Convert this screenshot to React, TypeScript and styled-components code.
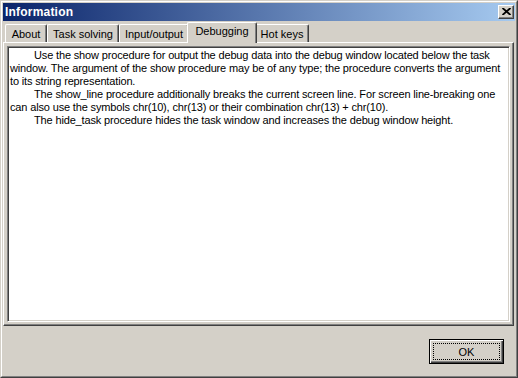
import React from "react";
import styled, { createGlobalStyle } from "styled-components";

const Global = createGlobalStyle`
  html, body { margin: 0; padding: 0; background: #d4d0c8; overflow: hidden; }
  * { box-sizing: border-box; }
`;

const Window = styled.div`
  width: 518px;
  height: 378px;
  border: 1px solid;
  border-color: #d4d0c8 #404040 #404040 #d4d0c8;
  background: #d4d0c8;
  font-family: "Liberation Sans", Arial, sans-serif;
  font-size: 11px;
  color: #000;
`;

const WindowInner = styled.div`
  height: 100%;
  border: 1px solid;
  border-color: #ffffff #808080 #808080 #ffffff;
  padding: 1px;
  display: flex;
  flex-direction: column;
`;

const TitleBar = styled.div`
  height: 18px;
  flex: none;
  display: flex;
  align-items: center;
  justify-content: space-between;
  padding: 0 1px 0 2px;
  background: linear-gradient(to right, #0a246a, #a6caf0);
`;

const TitleText = styled.span`
  color: #fff;
  font-weight: bold;
  font-size: 12px;
  letter-spacing: 0.2px;
  line-height: 18px;
`;

const CloseButton = styled.div`
  width: 16px;
  height: 14px;
  border: 1px solid;
  border-color: #ffffff #404040 #404040 #ffffff;
  box-shadow: inset -1px -1px #808080;
  background: #d4d0c8;
  display: flex;
  align-items: center;
  justify-content: center;
  padding-bottom: 1px;
`;

const Gap = styled.div`
  height: 1px;
  flex: none;
`;

const TabStrip = styled.div`
  height: 20px;
  flex: none;
  display: flex;
  align-items: flex-end;
  padding-left: 2px;
  position: relative;
  z-index: 1;
`;

const Tab = styled.div<{ $width: number; $active?: boolean }>`
  width: ${(p) => (p.$active ? p.$width + 4 : p.$width)}px;
  height: ${(p) => (p.$active ? 21 : 18)}px;
  margin: ${(p) => (p.$active ? "0 -2px -1px -2px" : "0")};
  padding-top: ${(p) => (p.$active ? 0 : 1)}px;
  position: relative;
  z-index: ${(p) => (p.$active ? 2 : 1)};
  background: #d4d0c8;
  border-top: 1px solid #ffffff;
  border-left: 1px solid #ffffff;
  border-right: 1px solid #404040;
  border-radius: 2px 2px 0 0;
  box-shadow: inset -1px 0 #808080;
  text-align: center;
  line-height: 16px;
  white-space: nowrap;
`;

const Panel = styled.div`
  height: 284px;
  flex: none;
  margin-right: 1px;
  border: 1px solid;
  border-color: #ffffff #404040 #404040 #ffffff;
  box-shadow: inset -1px -1px #808080;
  padding: 3px;
  display: flex;
`;

const Memo = styled.div`
  flex: 1;
  background: #ffffff;
  border: 1px solid;
  border-color: #808080 #ffffff #ffffff #808080;
  box-shadow: inset 1px 1px #404040, inset -1px -1px #d4d0c8;
  padding: 2px 2px;
  line-height: 13px;
  letter-spacing: -0.15px;
  white-space: nowrap;
  overflow: hidden;
`;

const Line = styled.div<{ $indent?: boolean }>`
  padding-left: ${(p) => (p.$indent ? 24 : 0)}px;
`;

const Footer = styled.div`
  flex: 1;
  display: flex;
  justify-content: flex-end;
  align-items: flex-start;
  padding: 13px 11px 0 0;
`;

const Button = styled.div`
  width: 75px;
  height: 25px;
  position: relative;
  border: 1px solid #000;
  box-shadow: inset 1px 1px #ffffff, inset -1px -1px #404040, inset -2px -2px #808080;
  display: flex;
  align-items: center;
  justify-content: center;
  font-size: 11px;
  &::after {
    content: "";
    position: absolute;
    inset: 3px;
    border: 1px dotted #000;
  }
`;

const tabs = [
  { label: "About", width: 42 },
  { label: "Task solving", width: 72 },
  { label: "Input/output", width: 70 },
  { label: "Debugging", width: 66, active: true },
  { label: "Hot keys", width: 54 },
];

export default function App() {
  return (
    <>
      <Global />
      <Window>
        <WindowInner>
          <TitleBar>
            <TitleText>Information</TitleText>
            <CloseButton>
              <svg width="9" height="7" viewBox="0 0 9 7">
                <path d="M0.5 0 L8.5 7 M8.5 0 L0.5 7" stroke="#000" strokeWidth="1.8" />
              </svg>
            </CloseButton>
          </TitleBar>
          <Gap />
          <TabStrip>
            {tabs.map((t) => (
              <Tab key={t.label} $width={t.width} $active={t.active}>
                {t.label}
              </Tab>
            ))}
          </TabStrip>
          <Panel>
            <Memo>
              <Line $indent>Use the show procedure for output the debug data into the debug window located below the task</Line>
              <Line>window. The argument of the show procedure may be of any type; the procedure converts the argument</Line>
              <Line>to its string representation.</Line>
              <Line $indent>The show_line procedure additionally breaks the current screen line. For screen line-breaking one</Line>
              <Line>can also use the symbols chr(10), chr(13) or their combination chr(13) + chr(10).</Line>
              <Line $indent>The hide_task procedure hides the task window and increases the debug window height.</Line>
            </Memo>
          </Panel>
          <Footer>
            <Button>OK</Button>
          </Footer>
        </WindowInner>
      </Window>
    </>
  );
}
